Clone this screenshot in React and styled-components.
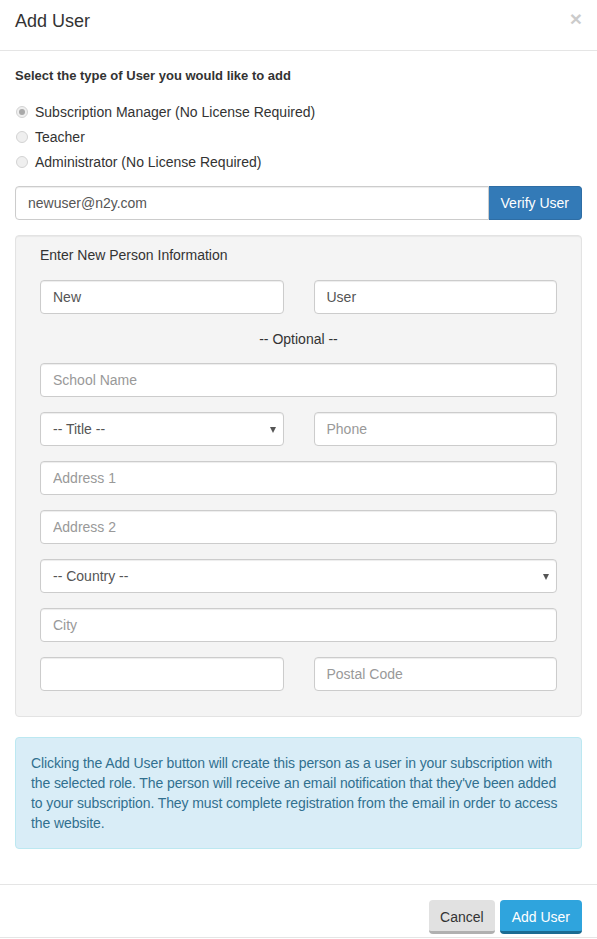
import React from "react";
import styled, { createGlobalStyle } from "styled-components";

const Global = createGlobalStyle`
  * { box-sizing: border-box; }
  html, body { margin: 0; padding: 0; background: #fff; }
  body {
    font-family: "Liberation Sans", Arial, sans-serif;
    font-size: 14px;
    line-height: 20px;
    color: #333;
  }
  input, select, button { font-family: inherit; }
  ::placeholder { color: #999; opacity: 1; }
`;

const Modal = styled.div`
  width: 597px;
  background: #fff;
  border-bottom: 1px solid #e5e5e5;
`;

const Header = styled.div`
  display: flex;
  justify-content: space-between;
  align-items: flex-start;
  padding: 11px 15px 19px 15px;
  border-bottom: 1px solid #e5e5e5;
`;

const Title = styled.h4`
  margin: 0;
  font-size: 18px;
  font-weight: 400;
  line-height: 20px;
  color: #333;
`;

const Close = styled.button`
  border: 0;
  background: none;
  padding: 0;
  margin: 0;
  font-size: 21px;
  font-weight: 700;
  line-height: 15px;
  color: #000;
  opacity: 0.2;
  cursor: pointer;
`;

const Body = styled.div`
  padding: 15px;
`;

const Lead = styled.div`
  font-size: 13px;
  font-weight: 700;
  line-height: 20px;
  margin-bottom: 16px;
`;

const RadioRow = styled.label`
  display: flex;
  align-items: center;
  height: 20px;
  margin-bottom: 5px;
  font-size: 14px;
  cursor: pointer;
`;

const Radio = styled.input.attrs({ type: "radio" })`
  appearance: none;
  -webkit-appearance: none;
  width: 12px;
  height: 12px;
  margin: 0 7px 0 1px;
  border-radius: 50%;
  border: 1px solid #d3d3d3;
  background: #efefef;
  position: relative;
  &:checked::after {
    content: "";
    position: absolute;
    left: 2px;
    top: 2px;
    width: 6px;
    height: 6px;
    border-radius: 50%;
    background: #a9a9a9;
  }
`;

const RadioGroup = styled.div`
  margin-bottom: 14px;
`;

const InputGroup = styled.div`
  display: flex;
  margin-bottom: 15px;
`;

const Field = styled.input`
  display: block;
  width: 100%;
  height: 34px;
  padding: 6px 12px;
  font-size: 14px;
  line-height: 20px;
  color: #555;
  background: #fff;
  border: 1px solid #ccc;
  border-radius: ${(p) => (p.$joined ? "4px 0 0 4px" : "4px")};
  box-shadow: inset 0 1px 1px rgba(0, 0, 0, 0.075);
  outline: none;
`;

const SelectWrap = styled.div`
  position: relative;
  width: 100%;
  &::after {
    content: "";
    position: absolute;
    right: 8px;
    top: 15px;
    border-left: 3.5px solid transparent;
    border-right: 3.5px solid transparent;
    border-top: 6px solid #555;
    pointer-events: none;
  }
`;

const Select = styled.select`
  appearance: none;
  -webkit-appearance: none;
  display: block;
  width: 100%;
  height: 34px;
  padding: 6px 12px;
  font-size: 14px;
  color: #555;
  background: #fff;
  border: 1px solid #ccc;
  border-radius: 4px;
  box-shadow: inset 0 1px 1px rgba(0, 0, 0, 0.075);
  outline: none;
`;

const VerifyButton = styled.button`
  flex: none;
  height: 34px;
  padding: 6px 12px;
  font-size: 14px;
  line-height: 20px;
  color: #fff;
  background: #337ab7;
  border: 1px solid #2e6da4;
  border-left: 0;
  border-radius: 0 4px 4px 0;
  cursor: pointer;
`;

const Well = styled.div`
  background: #f4f4f4;
  border: 1px solid #e3e3e3;
  border-radius: 4px;
  padding: 9px 24px 10px 24px;
  margin-bottom: 20px;
  box-shadow: inset 0 1px 1px rgba(0, 0, 0, 0.05);
`;

const WellLabel = styled.div`
  margin-bottom: 15px;
`;

const Row = styled.div`
  display: grid;
  grid-template-columns: ${(p) => (p.$cols === 2 ? "1fr 1fr" : "1fr")};
  column-gap: 30px;
  margin-bottom: ${(p) => (p.$flush ? "0" : "15px")};
`;

const Optional = styled.div`
  text-align: center;
  margin: 15px 0 14px 0;
`;

const Alert = styled.div`
  padding: 15px;
  margin-bottom: 20px;
  color: #31708f;
  background: #d9edf7;
  border: 1px solid #bce8f1;
  border-radius: 4px;
  line-height: 20px;
  letter-spacing: -0.1px;
`;

const Footer = styled.div`
  display: flex;
  justify-content: flex-end;
  gap: 5px;
  padding: 15px 15px 3px 15px;
  border-top: 1px solid #e5e5e5;
`;

const FooterButton = styled.button`
  height: 34px;
  padding: 3px ${(p) => (p.$primary ? "12px" : "11px")} 0;
  font-size: 14px;
  line-height: 20px;
  border: 0;
  border-radius: 4px;
  cursor: pointer;
  color: ${(p) => (p.$primary ? "#fff" : "#333")};
  background: ${(p) => (p.$primary ? "#2fa4dd" : "#e1e1e1")};
  border-bottom: 3px solid ${(p) => (p.$primary ? "#1b6b92" : "#b0b0b0")};
`;

export default function App() {
  return (
    <>
      <Global />
      <Modal>
        <Header>
          <Title>Add User</Title>
          <Close aria-label="Close">×</Close>
        </Header>
        <Body>
          <Lead>Select the type of User you would like to add</Lead>
          <RadioGroup>
            <RadioRow>
              <Radio name="role" defaultChecked />
              Subscription Manager (No License Required)
            </RadioRow>
            <RadioRow>
              <Radio name="role" />
              Teacher
            </RadioRow>
            <RadioRow>
              <Radio name="role" />
              Administrator (No License Required)
            </RadioRow>
          </RadioGroup>
          <InputGroup>
            <Field $joined defaultValue="newuser@n2y.com" />
            <VerifyButton>Verify User</VerifyButton>
          </InputGroup>
          <Well>
            <WellLabel>Enter New Person Information</WellLabel>
            <Row $cols={2} $flush>
              <Field defaultValue="New" />
              <Field defaultValue="User" />
            </Row>
            <Optional>-- Optional --</Optional>
            <Row>
              <Field placeholder="School Name" />
            </Row>
            <Row $cols={2}>
              <SelectWrap>
                <Select defaultValue="">
                  <option value="">-- Title --</option>
                </Select>
              </SelectWrap>
              <Field placeholder="Phone" />
            </Row>
            <Row>
              <Field placeholder="Address 1" />
            </Row>
            <Row>
              <Field placeholder="Address 2" />
            </Row>
            <Row>
              <SelectWrap>
                <Select defaultValue="">
                  <option value="">-- Country --</option>
                </Select>
              </SelectWrap>
            </Row>
            <Row>
              <Field placeholder="City" />
            </Row>
            <Row $cols={2}>
              <Field />
              <Field placeholder="Postal Code" />
            </Row>
          </Well>
          <Alert>
            Clicking the Add User button will create this person as a user in
            your subscription with the selected role. The person will receive an
            email notification that they've been added to your subscription.
            They must complete registration from the email in order to access
            the website.
          </Alert>
        </Body>
        <Footer>
          <FooterButton>Cancel</FooterButton>
          <FooterButton $primary>Add User</FooterButton>
        </Footer>
      </Modal>
    </>
  );
}
